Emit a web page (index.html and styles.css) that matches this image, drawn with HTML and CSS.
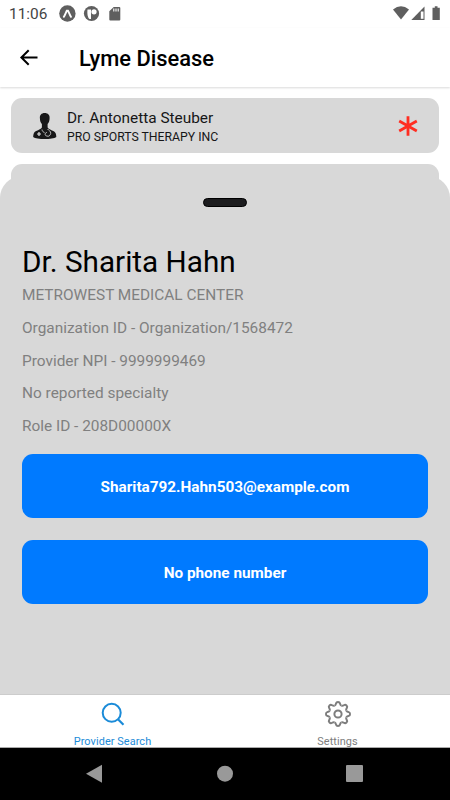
FILE: index.html
```html
<!DOCTYPE html>
<html lang="en">
<head>
<meta charset="utf-8">
<title>Lyme Disease</title>
<link rel="stylesheet" href="styles.css">
</head>
<body>
<div class="phone">
  <div class="status">
    <span class="clock">11:06</span>
    <svg class="notes" width="66" height="18" viewBox="0 0 66 18">
      <circle cx="8.4" cy="8.500" r="8.2" fill="#5f5f5f"/>
      <path d="M4.8 11.800C6.200 10 7 7.200 7.800 5.700h1.200c.8 1.400 1.600 4.300 3 6.100" fill="none" stroke="#fff" stroke-width="1.900" stroke-linecap="round"/>
      <circle cx="32.500" cy="8.500" r="7.600" fill="#5f5f5f"/>
      <path d="M28.500 4.500h3.500v9.500h-1.500C28.700 13 28 8.500 28.500 4.500z" fill="#fff"/>
      <circle cx="35" cy="6.800" r="2.600" fill="#fff"/>
      <path d="M54.700 2h5.600a1 1 0 0 1 1 1v11.400a1 1 0 0 1-1 1h-9a1 1 0 0 1-1-1V6.200z" fill="#5f5f5f"/>
      <path d="M54.800 3.500v3M57 3.500v3M59.200 3.500v3" stroke="#fff" stroke-width="1.100"/>
    </svg>
    <svg class="system" width="50" height="18" viewBox="0 0 50 18">
      <path d="M1 5.500Q9-.900 17 5.500L9 15.600z" fill="#5f5f5f"/>
      <path d="M19.300 16L32.500 2.500V16z" fill="#5f5f5f"/>
      <path d="M28.800 7.500h2.700v7.300h-2.700z" fill="#fff"/>
      <path d="M40.500 3.800h2.300V2.300h2.700v1.500h2.300V16h-7.300z" fill="#5f5f5f"/>
    </svg>
  </div>
  <header class="bar">
    <svg class="back" width="20" height="18" viewBox="0 0 20 18"><path d="M18.500 8.500H3M9.700 1.200L2.400 8.500l7.300 7.300" fill="none" stroke="#000" stroke-width="2"/></svg>
    <h1>Lyme Disease</h1>
  </header>
  <main class="content">
    <div class="card">
      <svg class="doctor" width="24" height="28" viewBox="0 0 24 28">
        <path d="M11.700 1C8.400 1 6.600 3.200 6.900 6.200c0 2.700.8 4.600 2 5.700v3.600c-1.200 2.600-6.400 2.600-7.900 5.500C.3 22.500.2 24 .2 25c3.500 2.700 19.500 2.700 23.100 0 0-1-.1-2.500-.8-4-1.500-2.900-6.700-2.900-7.900-5.500v-3.600c1.200-1.100 2-3 2-5.700C16.900 3.200 15 1 11.700 1z" fill="#171718"/>
        <path d="M4 22h4M6 20v4" stroke="#e4e4e4" stroke-width="1.200"/>
        <path d="M9 17.500c.2 2 1.500 2.700 2.500 3M14.500 17c1 1.500 3.700 2 3.200 4.500-.5 2-2.200 3.500-3.700 2.500M14 24c-2.500 0-2.500-3.500 0-3.500" fill="none" stroke="#dcdcdc" stroke-width=".8"/>
      </svg>
      <div class="who"><div class="who-name">Dr. Antonetta Steuber</div><div class="who-org">PRO SPORTS THERAPY INC</div></div>
      <svg class="star" width="20" height="20" viewBox="0 0 20 20"><path d="M10 .3v19.400M1.200 5l17.600 10M18.800 5L1.200 15" stroke="#ff2d21" stroke-width="2.800"/></svg>
    </div>
    <div class="card"></div>
  </main>
  <section class="sheet">
    <div class="handle"></div>
    <h2>Dr. Sharita Hahn</h2>
    <p>METROWEST MEDICAL CENTER</p>
    <p>Organization ID - Organization/1568472</p>
    <p>Provider NPI - 9999999469</p>
    <p>No reported specialty</p>
    <p>Role ID - 208D00000X</p>
    <button>Sharita792.Hahn503@example.com</button>
    <button>No phone number</button>
  </section>
  <nav class="tabs">
    <div class="tab active">
      <svg width="28" height="28" viewBox="-14 -14 28 28" fill="none" stroke="currentColor" stroke-width="2"><circle cx="-1.300" cy="-1.200" r="9"/><path d="M5 5.200l5.500 5.500" stroke-width="2.200"/></svg>
      <span>Provider Search</span>
    </div>
    <div class="tab">
      <svg width="28" height="28" viewBox="-14 -14 28 28" fill="none" stroke="currentColor" stroke-width="2">
        <defs><path id="tooth" d="M-3.440-8.310C-2.200-8.830-2.200-9.500-1.900-10.800Q-1.600-12 0-12Q1.600-12 1.900-10.800C2.200-9.500 2.200-8.830 3.440-8.310"/></defs>
        <use href="#tooth"/><use href="#tooth" transform="rotate(45)"/><use href="#tooth" transform="rotate(90)"/><use href="#tooth" transform="rotate(135)"/><use href="#tooth" transform="rotate(180)"/><use href="#tooth" transform="rotate(225)"/><use href="#tooth" transform="rotate(270)"/><use href="#tooth" transform="rotate(315)"/>
        <circle r="3.600"/>
      </svg>
      <span>Settings</span>
    </div>
  </nav>
  <footer class="system-nav">
    <svg width="450" height="52" viewBox="0 0 450 52" fill="#999"><path d="M86 25.700L102 16.700v18z"/><circle cx="225" cy="25.700" r="8"/><rect x="346" y="17" width="17" height="17" rx="1"/></svg>
  </footer>
</div>
</body>
</html>
```
FILE: styles.css
```css
* { box-sizing: border-box; }
body { margin: 0; font-family: Roboto, sans-serif; background: #fff; }
h1, h2, p { margin: 0; font-weight: 400; white-space: nowrap; }
svg { display: block; flex: none; }
.phone { position: relative; width: 450px; height: 800px; overflow: hidden; display: flex; flex-direction: column; }
.status { height: 28px; flex: none; display: flex; align-items: center; padding: 0 8px 2px 9px; color: #444; }
.clock { width: 50px; padding-top: 1px; font-size: 15.400px; }
.notes { margin-top: 1px; }
.system { margin-left: auto; }
.bar { height: 59px; flex: none; display: flex; align-items: center; padding-left: 19px; box-shadow: 0 1px 2px #00000026; }
.bar h1 { margin-left: 40px; padding-top: 2px; font-size: 21.900px; line-height: 28px; font-weight: 500; }
.content { flex: 1; padding: 11px 11px 0; display: flex; flex-direction: column; gap: 11px; }
.card { height: 55px; flex: none; border-radius: 11px; background: #d8d8d8; display: flex; align-items: center; padding: 0 21px 0 22px; color: #161617; }
.who { margin-left: 10px; padding-top: 3px; }
.who-name { font-size: 15.400px; line-height: 19px; }
.who-org { font-size: 12.250px; line-height: 18px; }
.star { margin-left: auto; }
.sheet { position: absolute; left: 0; right: 0; top: 176px; height: 518px; border-radius: 22px 22px 0 0; background: #d8d8d8; padding: 22px 22px 0; display: flex; flex-direction: column; }
.handle { width: 44px; height: 9px; border-radius: 5px; background: #1c1c1e; border: 1px solid #000; align-self: center; }
.sheet h2 { margin-top: 37px; font-size: 29.700px; line-height: 36px; height: 35px; }
.sheet p { font-size: 15.400px; line-height: 32.800px; color: #808080; }
.sheet button { height: 64px; flex: none; border: 0; border-radius: 11px; background: #007aff; color: #fff; font: 700 15.300px Roboto, sans-serif; padding: 2px 0 0; margin-top: 11px; }
.sheet button + button { margin-top: 22px; }
.tabs { height: 54px; flex: none; display: flex; background: #fff; border-top: 1px solid #ccc; border-bottom: 1px solid #aaa; }
.tab { flex: 1; display: flex; flex-direction: column; align-items: center; padding-top: 5px; color: #7d7d7d; font-size: 10.900px; }
.tab span { margin-top: 7px; line-height: 14px; letter-spacing: .08px; }
.tab.active { color: #1b8bd8; }
.system-nav { height: 52px; flex: none; background: #000; }
```
